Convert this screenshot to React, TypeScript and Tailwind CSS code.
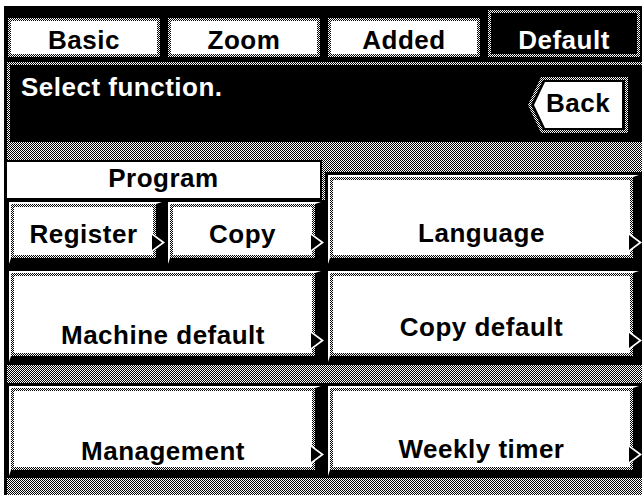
const CHECK = "bg-[image:repeating-conic-gradient(#000_0%_25%,#fff_0%_50%)] bg-size-[2px_2px]";

const tabs = [
  { label: "Basic", active: false },
  { label: "Zoom", active: false },
  { label: "Added", active: false },
  { label: "Default", active: true },
];

function Arrow() {
  return (
    <svg className="absolute right-[-9px] bottom-[6px]" width="13" height="19" viewBox="0 0 13 19">
      <polygon points="0,0 13,9.5 0,19" fill="#fff" />
      <polygon points="0,2 10,9.5 0,17" fill="#000" />
    </svg>
  );
}

function Key({ label, pb, arrow = true }: { label: string; pb: string; arrow?: boolean }) {
  return (
    <div
      className={`relative flex h-full border-t-2 border-l-2 border-r-[6px] border-b-[6px] border-t-white border-l-white border-r-black border-b-black p-[3px] ${CHECK}`}
    >
      <div className={`flex flex-1 items-end justify-center bg-white ${pb}`}>
        <span>{label}</span>
      </div>
      {arrow && <Arrow />}
    </div>
  );
}

function BackButton() {
  return (
    <div className="relative mt-[10px] mr-[12px] h-[60px] w-[104px]">
      <svg className="absolute inset-0" width="104" height="60" viewBox="0 0 104 60">
        <defs>
          <pattern id="chk" width="2" height="2" patternUnits="userSpaceOnUse">
            <rect width="2" height="2" fill="#fff" />
            <rect width="1" height="1" fill="#000" />
            <rect x="1" y="1" width="1" height="1" fill="#000" />
          </pattern>
        </defs>
        <polygon points="2,30 15,2 102,2 102,58 15,58" fill="url(#chk)" />
        <polygon points="5,30 17,5 99,5 99,55 17,55" fill="#000" />
        <polygon points="8,30 19,7 96,7 96,53 19,53" fill="#fff" />
      </svg>
      <span className="absolute left-[20px] top-[15px] text-black">Back</span>
    </div>
  );
}

export default function App() {
  return (
    <div className="h-[495px] w-[642px] bg-white pt-[6px] pl-[4px] font-['Liberation_Sans',Arial,sans-serif] text-[26px] leading-none font-bold tracking-[0.5px] text-black">
      <div className="flex h-full flex-col bg-black pl-[3px]">
        {/* tab strip */}
        <div className="grid h-[51px] grid-cols-4 items-end gap-[8px] pl-[1px] pr-[2px]">
          {tabs.map((t) => (
            <div key={t.label} className={`p-[3px] ${CHECK} ${t.active ? "h-[47px]" : "h-[39px]"}`}>
              <div
                className={`flex h-full items-end justify-center pb-[1px] ${
                  t.active ? "bg-black text-white" : "bg-white text-black"
                }`}
              >
                {t.label}
              </div>
            </div>
          ))}
        </div>
        <div className="h-[5px]" />

        {/* message line */}
        <div className={`pt-[3px] pl-[3px] ${CHECK}`}>
          <div className="flex h-[77px] justify-between bg-black">
            <span className="pt-[9px] pl-[11px] text-white">Select function.</span>
            <BackButton />
          </div>
        </div>

        {/* row 1 */}
        <div className="grid h-[126px] grid-cols-[318px_317px]">
          <div className="flex flex-col">
            <div className={`h-[18px] ${CHECK}`} />
            <div className={`flex h-[40px] ${CHECK}`}>
              <div className="mr-[3px] flex flex-1 justify-center border-2 border-l-0 border-black bg-white pt-[3px]">
                Program
              </div>
            </div>
            <div className="grid h-[68px] grid-cols-2 gap-[6px] bg-black pt-[2px] pb-[4px] pl-[2px] pr-[4px]">
              <Key label="Register" pb="pb-[8px]" />
              <Key label="Copy" pb="pb-[8px]" />
            </div>
          </div>
          <div className="flex flex-col">
            <div className={`h-[30px] ${CHECK}`} />
            <div className="h-[96px] bg-black pt-[3px] pb-[4px] pl-[3px] pr-[3px]">
              <Key label="Language" pb="pb-[9px]" />
            </div>
          </div>
        </div>

        {/* row 2 */}
        <div className="grid h-[97px] grid-cols-[318px_317px] bg-black">
          <div className="pt-[3px] pb-[3px] pl-[2px] pr-[4px]">
            <Key label="Machine default" pb="pb-[5px]" />
          </div>
          <div className="pt-[3px] pb-[3px] pl-[3px] pr-[3px]">
            <Key label="Copy default" pb="pb-[13px]" />
          </div>
        </div>

        <div className={`h-[18px] ${CHECK}`} />

        {/* row 3 */}
        <div className="grid h-[95px] grid-cols-[318px_317px] bg-black">
          <div className="pt-[3px] pb-[2px] pl-[2px] pr-[4px]">
            <Key label="Management" pb="pb-[3px]" />
          </div>
          <div className="pt-[3px] pb-[2px] pl-[3px] pr-[3px]">
            <Key label="Weekly timer" pb="pb-[5px]" />
          </div>
        </div>

        <div className={`flex-1 ${CHECK}`} />
      </div>
    </div>
  );
}
